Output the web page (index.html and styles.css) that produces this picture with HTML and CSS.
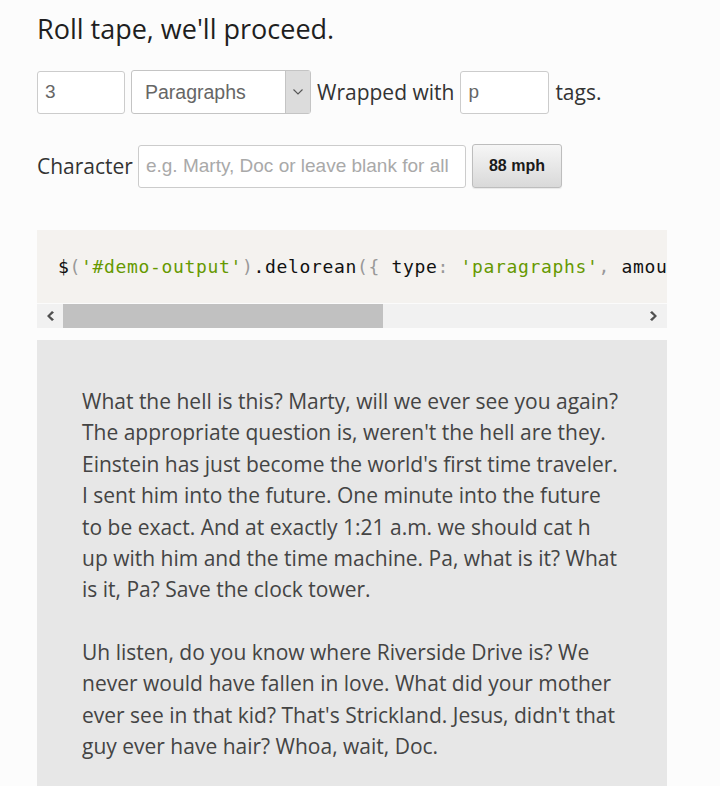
FILE: index.html
```html
<!DOCTYPE html>
<html>
<head>
<meta charset="utf-8">
<link rel="stylesheet" href="styles.css">
</head>
<body>
<div class="page">
  <h2 class="title">Roll tape, we'll proceed.</h2>
  <div class="row row-one">
    <input class="field field-num" type="text" value="3">
    <div class="select">
      <span class="select-text">Paragraphs</span>
      <span class="select-arrow">
        <svg width="12" height="8" viewBox="0 0 12 8"><path d="M1.5 1.5 L6 6 L10.5 1.5" fill="none" stroke="#555" stroke-width="1.1"/></svg>
      </span>
    </div>
    <span class="label">Wrapped with</span>
    <input class="field field-tag" type="text" value="p">
    <span class="label">tags.</span>
  </div>
  <div class="row row-two">
    <span class="label">Character</span>
    <input class="field field-char" type="text" placeholder="e.g. Marty, Doc or leave blank for all">
    <button class="btn">88 mph</button>
  </div>
  <div class="code-box">
    <pre class="code"><span class="t">$</span><span class="p">(</span><span class="s">'#demo-output'</span><span class="p">)</span><span class="t">.delorean</span><span class="p">({</span> <span class="t">type</span><span class="p">:</span> <span class="s">'paragraphs'</span><span class="p">,</span> <span class="t">amount</span><span class="p">:</span> <span class="n">3</span><span class="p">,</span> <span class="t">wrapper</span><span class="p">:</span> <span class="s">'p'</span> <span class="p">});</span></pre>
    <div class="scrollbar">
      <span class="sb-btn">
        <svg width="10" height="12" viewBox="0 0 10 12"><polygon points="7,1 9,2.5 5,6 9,9.5 7,11 2,6" fill="#505050"/></svg>
      </span>
      <div class="sb-track"><div class="sb-thumb"></div></div>
      <span class="sb-btn">
        <svg width="10" height="12" viewBox="0 0 10 12"><polygon points="3,1 1,2.5 5,6 1,9.5 3,11 8,6" fill="#505050"/></svg>
      </span>
    </div>
  </div>
  <div class="output">
    <p>What the hell is this? Marty, will we ever see you again?<br>The appropriate question is, weren't the hell are they.<br>Einstein has just become the world's first time traveler.<br>I sent him into the future. One minute into the future<br>to be exact. And at exactly 1:21 a.m. we should cat h<br>up with him and the time machine. Pa, what is it? What<br>is it, Pa? Save the clock tower.</p>
    <p>Uh listen, do you know where Riverside Drive is? We<br>never would have fallen in love. What did your mother<br>ever see in that kid? That's Strickland. Jesus, didn't that<br>guy ever have hair? Whoa, wait, Doc.</p>
  </div>
</div>
</body>
</html>
```
FILE: styles.css
```css
html, body {
  margin: 0;
  padding: 0;
  background: #fcfcfc;
}
.page {
  padding: 11px 0 0 37px;
  width: 630px;
  font-family: "Open Sans", "Noto Sans", sans-serif;
  color: #2a2a2a;
}
.title {
  margin: 0;
  font-size: 27px;
  font-weight: 400;
  line-height: 35px;
  color: #1f1f1f;
}
.row {
  display: flex;
  align-items: center;
  gap: 6px;
}
.row-one {
  margin-top: 24px;
  height: 44px;
}
.row-two {
  margin-top: 30px;
  height: 44px;
}
.label {
  font-size: 21px;
  color: #333;
  line-height: 28px;
}
.field {
  box-sizing: border-box;
  height: 43px;
  border: 1px solid #cccccc;
  border-radius: 3px;
  background: #fff;
  padding: 0 7px;
  font-family: "Liberation Sans", Arial, sans-serif;
  font-size: 19px;
  color: #666;
  outline: none;
  margin: 0;
}
.field::placeholder {
  color: #a9a9a9;
}
.field-num { width: 88px; }
.field-tag { width: 89px; }
.field-char { width: 328px; margin-left: -1px; }
.select {
  box-sizing: border-box;
  width: 180px;
  height: 44px;
  border: 1px solid #c4c4c4;
  border-radius: 3px;
  background: #fff;
  display: flex;
  align-items: stretch;
}
.select-text {
  flex: 1;
  display: flex;
  align-items: center;
  padding-left: 13px;
  font-family: "Liberation Sans", Arial, sans-serif;
  font-size: 19.5px;
  color: #666;
}
.select-arrow {
  width: 24px;
  background: #dcdcdc;
  border-left: 1px solid #c4c4c4;
  display: flex;
  align-items: center;
  justify-content: center;
}
.btn {
  box-sizing: border-box;
  height: 44px;
  width: 90px;
  border: 1px solid #bdbdbd;
  border-radius: 3px;
  background: linear-gradient(#f6f6f6, #d9d9d9);
  font-family: "Liberation Sans", Arial, sans-serif;
  font-weight: 700;
  font-size: 16px;
  color: #1a1a1a;
  box-shadow: 0 1px 1px rgba(0,0,0,0.08);
  padding: 0;
}
.code-box {
  margin-top: 42px;
  width: 630px;
  background: #f4f2ef;
}
.code {
  margin: 0;
  padding: 0 0 0 21px;
  height: 73px;
  line-height: 73px;
  overflow: hidden;
  white-space: pre;
  font-family: "DejaVu Sans Mono", "Liberation Mono", monospace;
  font-size: 18px;
  letter-spacing: 0.66px;
  color: #111;
  border-bottom: 1px solid #fbfbfb;
}
.code .t { color: #111; }
.code .p { color: #999; }
.code .s { color: #669900; }
.code .n { color: #990055; }
.scrollbar {
  display: flex;
  height: 24px;
  background: #f1f1f1;
}
.sb-btn {
  width: 26px;
  display: flex;
  align-items: center;
  justify-content: center;
}
.sb-track {
  flex: 1;
  display: flex;
}
.sb-thumb {
  width: 320px;
  background: #c1c1c1;
}
.output {
  margin-top: 12px;
  width: 630px;
  box-sizing: border-box;
  background: #e7e7e7;
  padding: 46px 30px 30px 45px;
}
.output p {
  margin: 0 0 31px 0;
  font-size: 21px;
  line-height: 31.4px;
  color: #444;
}
```
